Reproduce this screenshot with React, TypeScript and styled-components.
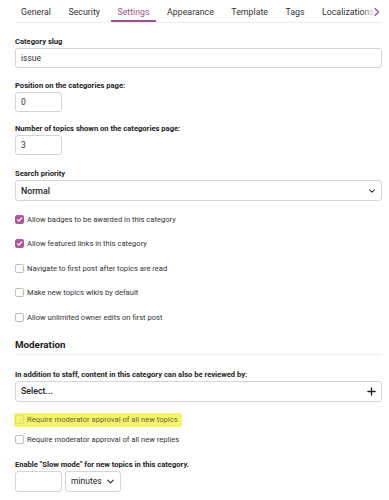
import React from 'react';
import styled, { createGlobalStyle } from 'styled-components';

const Global = createGlobalStyle`
  html, body {
    margin: 0;
    padding: 0;
    background: #fff;
  }
  body {
    font-family: Roboto, "Noto Sans", "Liberation Sans", sans-serif;
    color: #222;
  }
`;

const tabs = ['General', 'Security', 'Settings', 'Appearance', 'Template', 'Tags', 'Localizations'];

const checks = [
  { label: 'Allow badges to be awarded in this category', on: true },
  { label: 'Allow featured links in this category', on: true },
  { label: 'Navigate to first post after topics are read', on: false },
  { label: 'Make new topics wikis by default', on: false },
  { label: 'Allow unlimited owner edits on first post', on: false },
];

function Chevron({ size = 8 }: { size?: number }) {
  return (
    <svg width={size} height={size} viewBox="0 0 10 10" fill="none">
      <path d="M2 3.5 L5 6.5 L8 3.5" stroke="#333" strokeWidth="1.4" strokeLinecap="round" strokeLinejoin="round" />
    </svg>
  );
}

function Box({ on, faint }: { on: boolean; faint?: boolean }) {
  return (
    <Check $on={on} $faint={faint}>
      {on && (
        <svg width="7" height="7" viewBox="0 0 10 10" fill="none">
          <path d="M2 5.2 L4.2 7.4 L8.2 2.6" stroke="#fff" strokeWidth="1.6" strokeLinecap="round" strokeLinejoin="round" />
        </svg>
      )}
    </Check>
  );
}

export default function App(): JSX.Element {
  return (
    <Page>
      <Global />
      <TabBar>
        <TabRow>
          {tabs.map((t) => (
            <Tab key={t} $active={t === 'Settings'}>
              {t}
            </Tab>
          ))}
        </TabRow>
        <More>
          <svg width="8" height="10" viewBox="0 0 8 10" fill="none">
            <path d="M2 1.5 L5.5 5 L2 8.5" stroke="#a0528f" strokeWidth="1.3" strokeLinecap="round" strokeLinejoin="round" />
          </svg>
        </More>
      </TabBar>

      <Field $gap={13}>
        <Label>Category slug</Label>
        <Input $wide>issue</Input>
      </Field>
      <Field $gap={12}>
        <Label>Position on the categories page:</Label>
        <Input>0</Input>
      </Field>
      <Field $gap={11}>
        <Label>Number of topics shown on the categories page:</Label>
        <Input>3</Input>
      </Field>
      <Field $gap={13}>
        <Label>Search priority</Label>
        <Select>
          <SelectText>Normal</SelectText>
          <Chevron />
        </Select>
      </Field>

      <Checks>
        {checks.map((c) => (
          <CheckRow key={c.label}>
            <Box on={c.on} />
            <CheckText>{c.label}</CheckText>
          </CheckRow>
        ))}
      </Checks>

      <Heading>Moderation</Heading>

      <Field $gap={14}>
        <Label>In addition to staff, content in this category can also be reviewed by:</Label>
        <Select>
          <SelectText>Select...</SelectText>
          <svg width="9" height="9" viewBox="0 0 10 10" fill="none">
            <path d="M5 1 V9 M1 5 H9" stroke="#222" strokeWidth="1.5" strokeLinecap="round" />
          </svg>
        </Select>
      </Field>

      <ModChecks>
        <ModRow>
          <Highlight>
            <Box on={false} faint />
            <CheckText $faint>Require moderator approval of all new topics</CheckText>
          </Highlight>
        </ModRow>
        <ModRow>
          <Box on={false} />
          <CheckText>Require moderator approval of all new replies</CheckText>
        </ModRow>
      </ModChecks>

      <Field $gap={9}>
        <Label>Enable "Slow mode" for new topics in this category.</Label>
        <Inline>
          <Input $tall />
          <Unit>
            minutes
            <Chevron size={9} />
          </Unit>
        </Inline>
      </Field>
    </Page>
  );
}

const Page = styled.div`
  padding: 0 7px 0 15px;
  width: 367px;
`;

const TabBar = styled.nav`
  position: relative;
  height: 23px;
  border-bottom: 1px solid #ececec;
  overflow: hidden;
  box-sizing: border-box;
`;

const TabRow = styled.div`
  display: flex;
  gap: 5.5px;
  height: 100%;
  white-space: nowrap;
`;

const Tab = styled.div<{ $active?: boolean }>`
  display: flex;
  align-items: center;
  padding: 3px 6px 0;
  font-size: 8.8px;
  color: ${(p) => (p.$active ? '#a0528f' : '#333')};
  border-bottom: 2px solid ${(p) => (p.$active ? '#a0528f' : 'transparent')};
  box-sizing: border-box;
`;

const More = styled.div`
  position: absolute;
  right: 0;
  top: 0;
  bottom: 1px;
  width: 20px;
  display: flex;
  align-items: center;
  justify-content: flex-end;
  padding: 3px 1px 0 0;
  box-sizing: border-box;
  background: linear-gradient(90deg, rgba(255, 255, 255, 0), rgba(255, 255, 255, 0.85) 60%);
`;

const Field = styled.div<{ $gap: number }>`
  margin-top: ${(p) => p.$gap}px;
`;

const Label = styled.div`
  font-size: 7.6px;
  line-height: 11px;
  font-weight: 700;
  color: #222;
  margin-bottom: 1px;
`;

const Input = styled.div<{ $wide?: boolean; $tall?: boolean }>`
  box-sizing: border-box;
  width: ${(p) => (p.$wide ? '100%' : '47px')};
  height: ${(p) => (p.$tall ? '21px' : '20px')};
  border: 1px solid #d4d4d4;
  border-radius: 3px;
  padding: 0 5px;
  font-size: 8.5px;
  line-height: 18px;
  color: #333;
`;

const Select = styled.div`
  box-sizing: border-box;
  display: flex;
  align-items: center;
  justify-content: space-between;
  height: 21px;
  border: 1px solid #d4d4d4;
  border-radius: 3px;
  padding: 0 5px;
`;

const SelectText = styled.span`
  font-size: 8.8px;
  font-weight: 500;
  color: #222;
`;

const Checks = styled.div`
  margin-top: 6px;
`;

const CheckRow = styled.label`
  display: flex;
  align-items: center;
  gap: 3px;
  height: 24.5px;
`;

const Check = styled.span<{ $on: boolean; $faint?: boolean }>`
  box-sizing: border-box;
  display: inline-flex;
  align-items: center;
  justify-content: center;
  width: 9px;
  height: 9px;
  border-radius: 2px;
  border: 1px solid ${(p) => (p.$on ? '#b0569b' : p.$faint ? '#dcdc8a' : '#bdbdbd')};
  background: ${(p) => (p.$on ? '#b0569b' : 'transparent')};
`;

const CheckText = styled.span<{ $faint?: boolean }>`
  font-size: 7.6px;
  color: ${(p) => (p.$faint ? '#6a6a3a' : '#333')};
`;

const Heading = styled.h3`
  margin: 8px 0 0;
  padding-bottom: 2px;
  font-size: 9.8px;
  line-height: 14px;
  font-weight: 700;
  color: #222;
  border-bottom: 1px solid #efefef;
`;

const ModChecks = styled.div`
  margin-top: 8px;
`;

const ModRow = styled.div`
  display: flex;
  align-items: center;
  gap: 3px;
  height: 20px;
`;

const Highlight = styled.span`
  display: inline-flex;
  align-items: center;
  gap: 3px;
  height: 14px;
  margin-left: -1px;
  padding: 0 4px 0 1px;
  background: #f4f46a;
  border-radius: 3px;
`;

const Inline = styled.div`
  display: flex;
  gap: 3px;
`;

const Unit = styled.div`
  box-sizing: border-box;
  display: flex;
  align-items: center;
  gap: 4px;
  height: 21px;
  padding: 0 5px;
  border: 1px solid #d4d4d4;
  border-radius: 3px;
  font-size: 8.5px;
  color: #222;
`;
